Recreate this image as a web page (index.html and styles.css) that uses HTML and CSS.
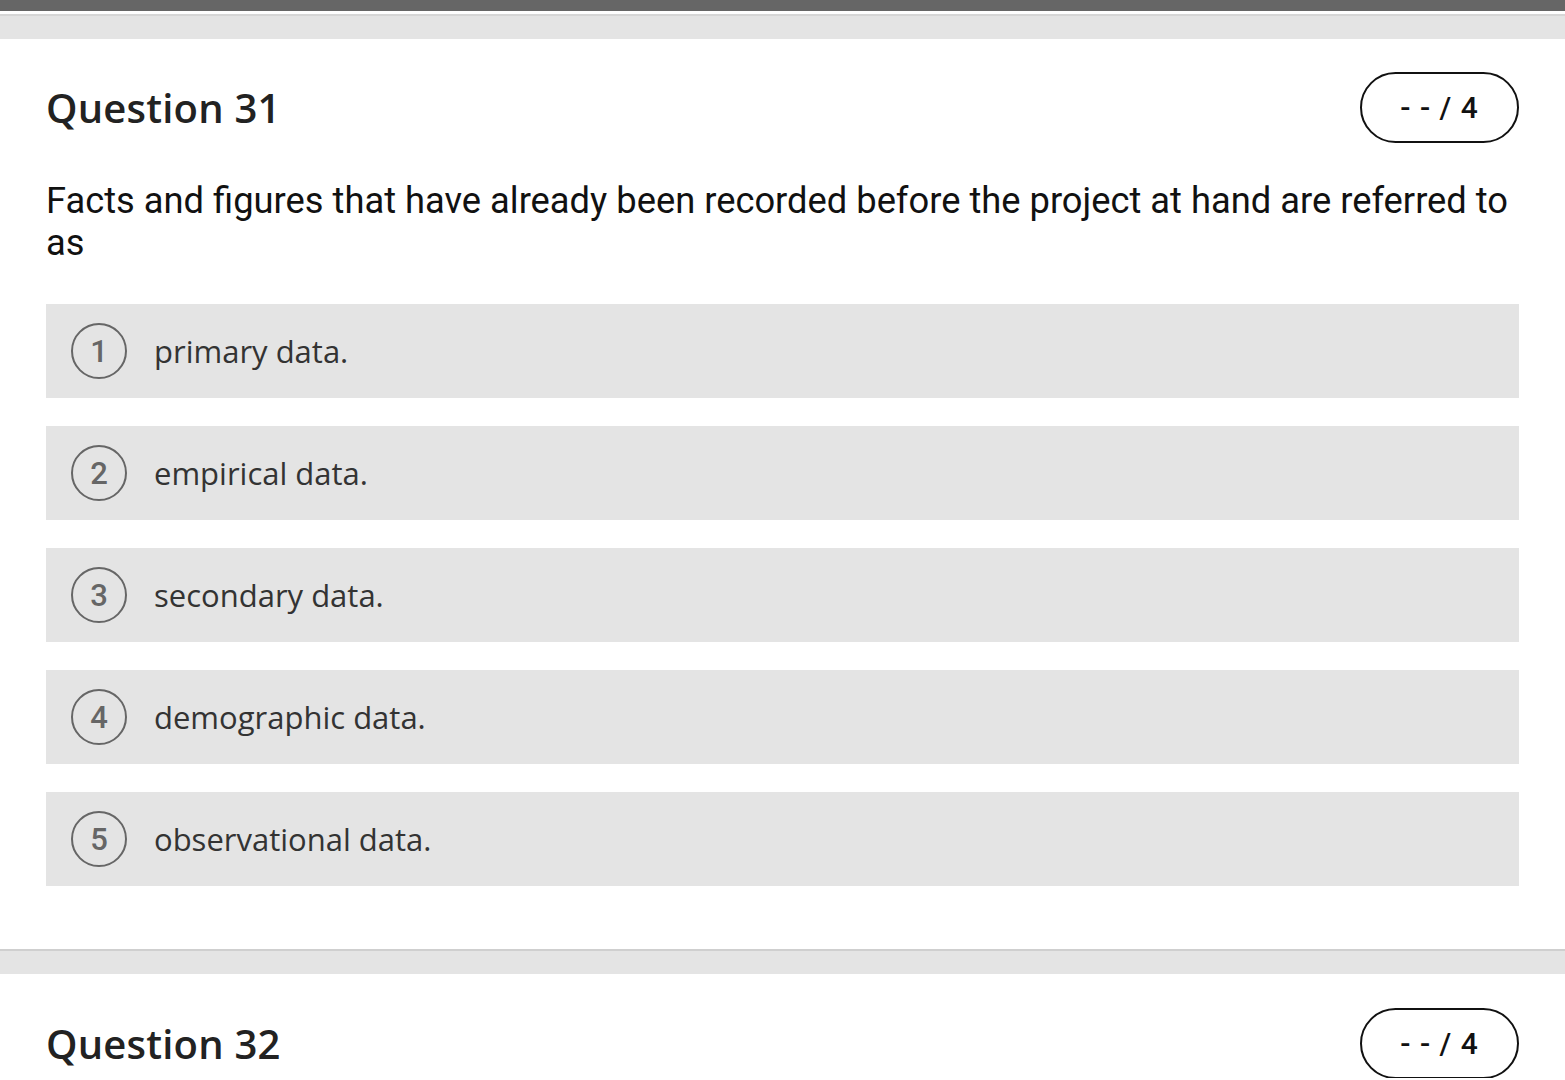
FILE: index.html
```html
<!DOCTYPE html>
<html>
<head>
<meta charset="utf-8">
<link rel="stylesheet" href="styles.css">
</head>
<body>
<div class="topbar"></div>
<div class="band"></div>
<section class="question">
  <div class="q-head">
    <h2 class="q-title">Question 31</h2>
    <div class="score">- - / 4</div>
  </div>
  <p class="q-text">Facts and figures that have already been recorded before the project at hand are referred to as</p>
  <div class="options">
    <div class="option"><span class="num">1</span><span class="label">primary data.</span></div>
    <div class="option"><span class="num">2</span><span class="label">empirical data.</span></div>
    <div class="option"><span class="num">3</span><span class="label">secondary data.</span></div>
    <div class="option"><span class="num">4</span><span class="label">demographic data.</span></div>
    <div class="option"><span class="num">5</span><span class="label">observational data.</span></div>
  </div>
</section>
<div class="band band-sep"></div>
<section class="question question-next">
  <div class="q-head">
    <h2 class="q-title">Question 32</h2>
    <div class="score">- - / 4</div>
  </div>
</section>
</body>
</html>
```
FILE: styles.css
```css
html, body {
  margin: 0;
  padding: 0;
  background: #fff;
  overflow: hidden;
}
body {
  font-family: "Open Sans", sans-serif;
  color: #222;
}
.topbar {
  height: 11px;
  background: #666;
  border-bottom: 3px solid #fff;
}
.band {
  height: 23px;
  background: #e4e4e4;
  border-top: 2px solid #d6d6d6;
}
.band-sep {
  border-top: 2px solid #cfcfcf;
}
.question {
  padding: 33px 46px 0 46px;
}
.question-next {
  padding-top: 34px;
}
.q-head {
  display: flex;
  justify-content: space-between;
  align-items: center;
  height: 70px;
}
.q-title {
  margin: 0;
  font-family: "Open Sans", sans-serif;
  font-weight: 600;
  font-size: 40px;
  color: #222;
  letter-spacing: 0.2px;
}
.score {
  box-sizing: border-box;
  width: 159px;
  height: 71px;
  border: 2px solid #111;
  border-radius: 36px;
  display: flex;
  align-items: center;
  justify-content: center;
  font-family: Roboto, sans-serif;
  font-weight: 500;
  font-size: 30px;
  color: #111;
  letter-spacing: 1px;
}
.q-text {
  margin: 38px 0 0 0;
  font-family: Roboto, sans-serif;
  font-size: 36.3px;
  line-height: 42px;
  color: #111;
}
.options {
  margin-top: 40px;
  display: flex;
  flex-direction: column;
  gap: 28px;
  padding-bottom: 63px;
}
.option {
  height: 94px;
  background: #e4e4e4;
  display: flex;
  align-items: center;
  padding-left: 25px;
}
.num {
  box-sizing: border-box;
  width: 56px;
  height: 56px;
  border: 2px solid #666;
  border-radius: 50%;
  display: flex;
  align-items: center;
  justify-content: center;
  font-family: Roboto, sans-serif;
  font-weight: 500;
  font-size: 31px;
  color: #666;
}
.label {
  margin-left: 27px;
  font-family: "Open Sans", sans-serif;
  font-size: 31px;
  color: #333;
}
```
